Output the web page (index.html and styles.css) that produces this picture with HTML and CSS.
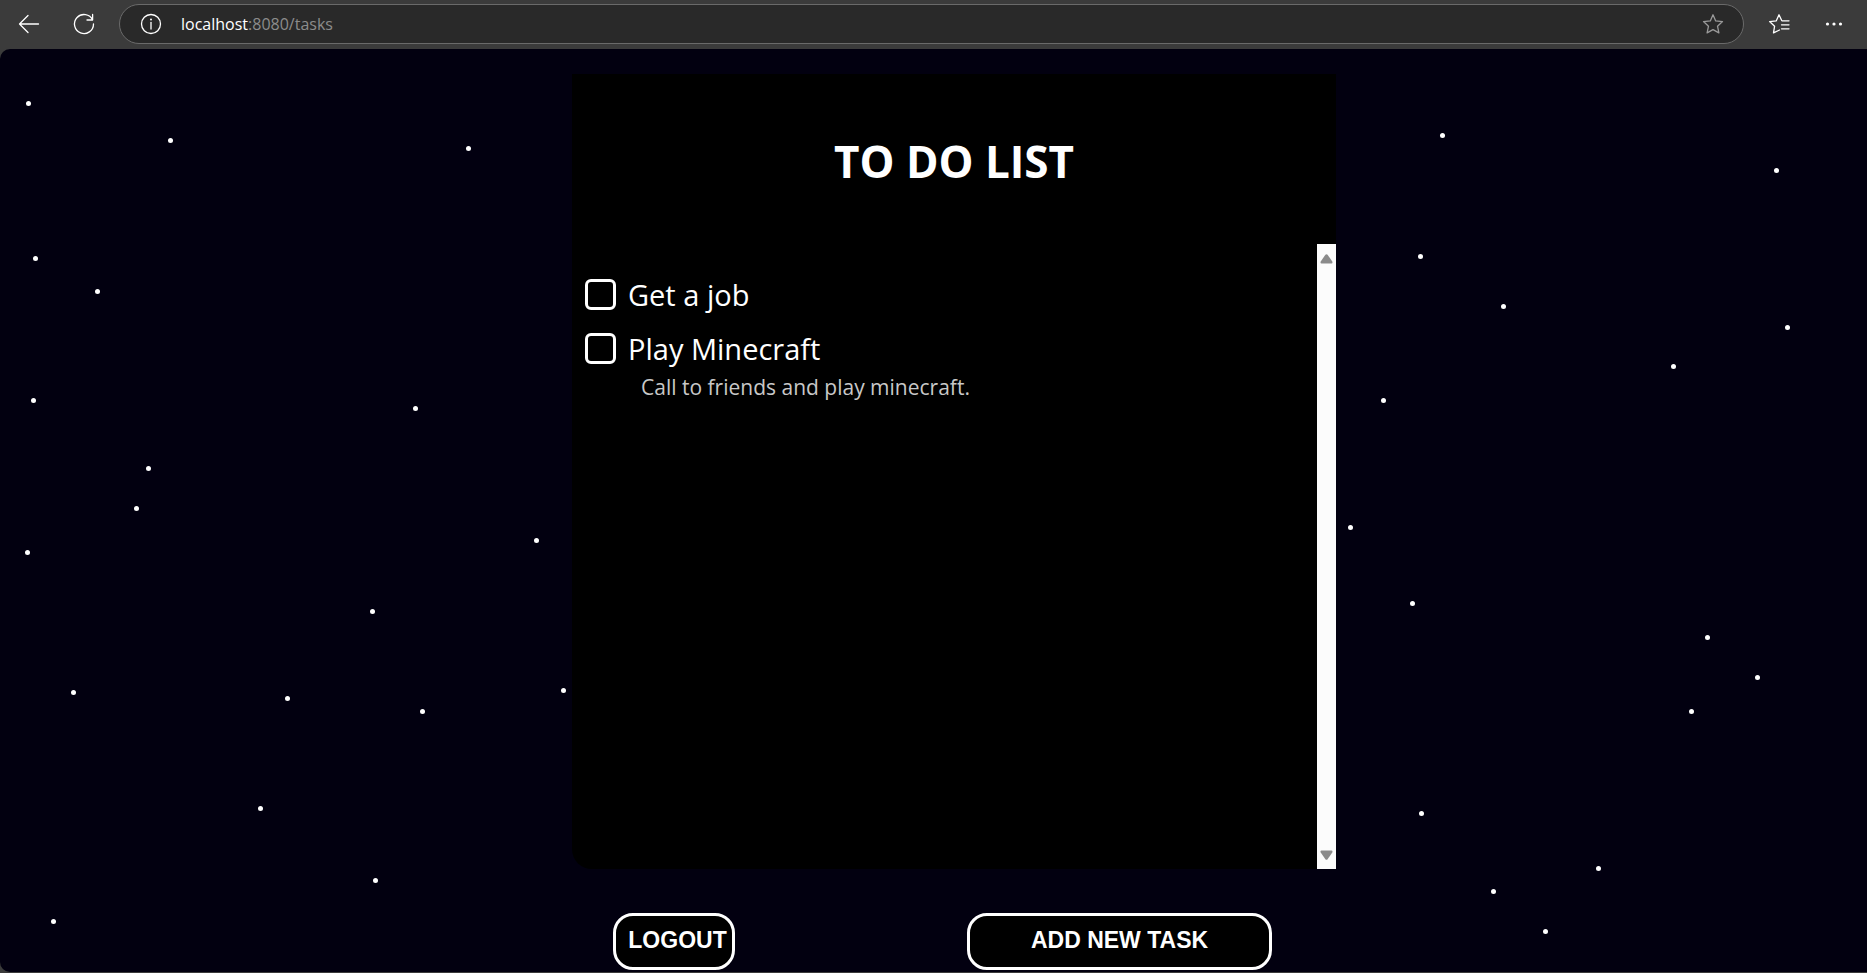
FILE: index.html
```html
<!DOCTYPE html>
<html lang="en">
<head>
<meta charset="utf-8">
<title>To Do List</title>
<link rel="stylesheet" href="styles.css">
</head>
<body>
<header class="toolbar">
  <button class="tool" type="button" aria-label="Back">
    <svg width="24" height="24" viewBox="0 0 24 24"><path d="M21.500 12H2.500M11 3.500L2.500 12L11 20.500"/></svg>
  </button>
  <button class="tool" type="button" aria-label="Refresh">
    <svg width="24" height="24" viewBox="0 0 24 24"><path d="M20.600 8A9.500 9.500 0 1 0 21.500 12M20.600 2.500V8H15"/></svg>
  </button>
  <div class="address">
    <button class="tool" type="button" aria-label="Site information">
      <svg width="24" height="24" viewBox="0 0 24 24"><circle cx="12" cy="12" r="9.500"/><path d="M12 10.500V17"/><circle class="solid" cx="12" cy="7.500" r="1"/></svg>
    </button>
    <span class="url"><span class="host">localhost</span>:8080/tasks</span>
    <button class="tool dim" type="button" aria-label="Add to favorites">
      <svg width="24" height="24" viewBox="0 0 24 24"><path d="M12 2.800L14.700 8.900L21.500 9.600L16.500 14.200L17.900 20.900L12 17.600L6.100 20.900L7.500 14.200L2.500 9.600L9.300 8.900Z"/></svg>
    </button>
  </div>
  <button class="tool" type="button" aria-label="Favorites">
    <svg width="24" height="24" viewBox="0 0 24 24"><path d="M12.500 18L6.500 20.900L7.600 14.200L2.600 9.600L9.200 8.900L12 2.800L14.700 8.500M15 8.800H22M14.500 12.800H22M14.500 16.800H22"/></svg>
  </button>
  <button class="tool" type="button" aria-label="Settings and more">
    <svg width="24" height="24" viewBox="0 0 24 24"><g class="solid"><circle cx="5.500" cy="12" r="1.600"/><circle cx="12" cy="12" r="1.600"/><circle cx="18.500" cy="12" r="1.600"/></g></svg>
  </button>
</header>
<main class="page">
  <svg class="stars" viewBox="0 49 1867 923" preserveAspectRatio="xMidYMid slice" aria-hidden="true">
    <circle cx="28.500" cy="103.500" r="2.500"/><circle cx="170.500" cy="140.500" r="2.500"/><circle cx="468.500" cy="148.500" r="2.500"/>
    <circle cx="1442.500" cy="135.500" r="2.500"/><circle cx="1776.500" cy="170.500" r="2.500"/><circle cx="35.500" cy="258.500" r="2.500"/>
    <circle cx="97.500" cy="291.500" r="2.500"/><circle cx="1420.500" cy="256.500" r="2.500"/><circle cx="1503.500" cy="306.500" r="2.500"/>
    <circle cx="1787.500" cy="327.500" r="2.500"/><circle cx="1673.500" cy="366.500" r="2.500"/><circle cx="33.500" cy="400.500" r="2.500"/>
    <circle cx="415.500" cy="408.500" r="2.500"/><circle cx="1383.500" cy="400.500" r="2.500"/><circle cx="148.500" cy="468.500" r="2.500"/>
    <circle cx="136.500" cy="508.500" r="2.500"/><circle cx="27.500" cy="552.500" r="2.500"/><circle cx="536.500" cy="540.500" r="2.500"/>
    <circle cx="1350.500" cy="527.500" r="2.500"/><circle cx="372.500" cy="611.500" r="2.500"/><circle cx="1412.500" cy="603.500" r="2.500"/>
    <circle cx="1707.500" cy="637.500" r="2.500"/><circle cx="1757.500" cy="677.500" r="2.500"/><circle cx="73.500" cy="692.500" r="2.500"/>
    <circle cx="287.500" cy="698.500" r="2.500"/><circle cx="422.500" cy="711.500" r="2.500"/><circle cx="563.500" cy="690.500" r="2.500"/>
    <circle cx="1691.500" cy="711.500" r="2.500"/><circle cx="260.500" cy="808.500" r="2.500"/><circle cx="1421.500" cy="813.500" r="2.500"/>
    <circle cx="375.500" cy="880.500" r="2.500"/><circle cx="1598.500" cy="868.500" r="2.500"/><circle cx="1493.500" cy="891.500" r="2.500"/>
    <circle cx="53.500" cy="921.500" r="2.500"/><circle cx="1545.500" cy="931.500" r="2.500"/>
  </svg>
  <section class="panel">
    <h1 class="title">TO DO LIST</h1>
    <div class="body">
      <ul class="tasks">
        <li class="task">
          <input class="check" type="checkbox" id="task-job">
          <label class="name" for="task-job">Get a job</label>
        </li>
        <li class="task">
          <input class="check" type="checkbox" id="task-play">
          <label class="name" for="task-play">Play Minecraft</label>
          <p class="note">Call to friends and play minecraft.</p>
        </li>
      </ul>
      <div class="scrollbar" aria-hidden="true">
        <svg width="13" height="10" viewBox="0 0 13 10"><path d="M5.400 0.800Q6.500 -0.300 7.600 0.800L12.300 7.600Q13 9.500 11.500 9.500H1.500Q0 9.500 0.700 7.600Z"/></svg>
        <svg width="13" height="10" viewBox="0 0 13 10"><path d="M5.400 9.200Q6.500 10.300 7.600 9.200L12.300 2.400Q13 0.500 11.500 0.500H1.500Q0 0.500 0.700 2.400Z"/></svg>
      </div>
    </div>
  </section>
  <div class="actions">
    <button class="action logout" type="button">LOGOUT</button>
    <button class="action add" type="button">ADD NEW TASK</button>
  </div>
</main>
</body>
</html>
```
FILE: styles.css
```css
* {
  box-sizing: border-box;
}

body {
  display: flex;
  flex-direction: column;
  min-height: 100vh;
  margin: 0;
  padding-bottom: 1px;
  background: #3b3b3b;
  color: #fff;
  font-family: "Segoe UI", "Open Sans", "Noto Sans", sans-serif;
}

.toolbar {
  display: flex;
  align-items: center;
  height: 49px;
  padding: 0 21px 1px 17px;
  gap: 31px;
}

.tool {
  display: flex;
  flex: none;
  padding: 0;
  border: 0;
  background: none;
  color: #fff;
}

.tool svg {
  fill: none;
  stroke: currentColor;
  stroke-width: 1.3;
  stroke-linejoin: round;
  stroke-linecap: round;
}

.tool .solid {
  fill: currentColor;
  stroke: none;
}

.dim {
  color: #9a9a9a;
}

.address {
  display: flex;
  flex: 1;
  align-items: center;
  height: 40px;
  margin: 0 -8px 0 -8px;
  padding: 0 18px 0 19px;
  gap: 18px;
  border: 1px solid #6a6a6a;
  border-radius: 20px;
  background: #292929;
}

.url {
  flex: 1;
  color: #8c8c8c;
  font-size: 16px;
  line-height: 24px;
}

.host {
  color: #fff;
}

.page {
  position: relative;
  display: flex;
  flex: 1;
  flex-direction: column;
  align-items: center;
  padding: 25px 0 2px 41px;
  border-radius: 10px 0 0 10px;
  background: #020010;
  overflow: hidden;
}

.stars {
  position: absolute;
  inset: 0;
  width: 100%;
  height: 100%;
  fill: #fff;
}

.panel {
  position: relative;
  display: flex;
  flex: 1;
  flex-direction: column;
  width: 100%;
  max-width: 764px;
  border-radius: 0 0 0 20px;
  background: #000;
}

.title {
  margin: 0;
  padding: 55px 0 51px;
  font-size: 44px;
  line-height: 64px;
  text-align: center;
}

.body {
  display: flex;
  flex: 1;
}

.tasks {
  display: flex;
  flex: 1;
  flex-direction: column;
  gap: 17px;
  margin: 0;
  padding: 32px 13px;
  list-style: none;
}

.task {
  display: grid;
  grid-template-columns: 31px 1fr;
  column-gap: 12px;
  align-items: center;
}

.check {
  width: 31px;
  height: 31px;
  margin: 0;
  appearance: none;
  border: 3px solid #fff;
  border-radius: 6px;
  background: #000;
}

.check:checked {
  background: #fff;
}

.name {
  font-size: 29px;
  line-height: 37px;
}

.note {
  grid-column: 2;
  margin: 0;
  padding-left: 13px;
  color: #c8c8c8;
  font-size: 21px;
  line-height: 40px;
}

.scrollbar {
  display: flex;
  flex-direction: column;
  align-items: center;
  justify-content: space-between;
  width: 19px;
  padding: 10px 0 9px;
  background: #fcfcfc;
  fill: #8b8b8b;
}

.actions {
  position: relative;
  display: flex;
  justify-content: space-between;
  width: 100%;
  max-width: 764px;
  padding: 44px 64px 0 41px;
}

.action {
  height: 57px;
  padding: 0 0 4px;
  border: 3px solid #fff;
  border-radius: 20px;
  background: #000;
  color: #fff;
  font: bold 23px/28px "Liberation Sans", Arial, sans-serif;
}

.logout {
  width: 122px;
  padding-left: 7px;
}

.add {
  width: 305px;
}
```
